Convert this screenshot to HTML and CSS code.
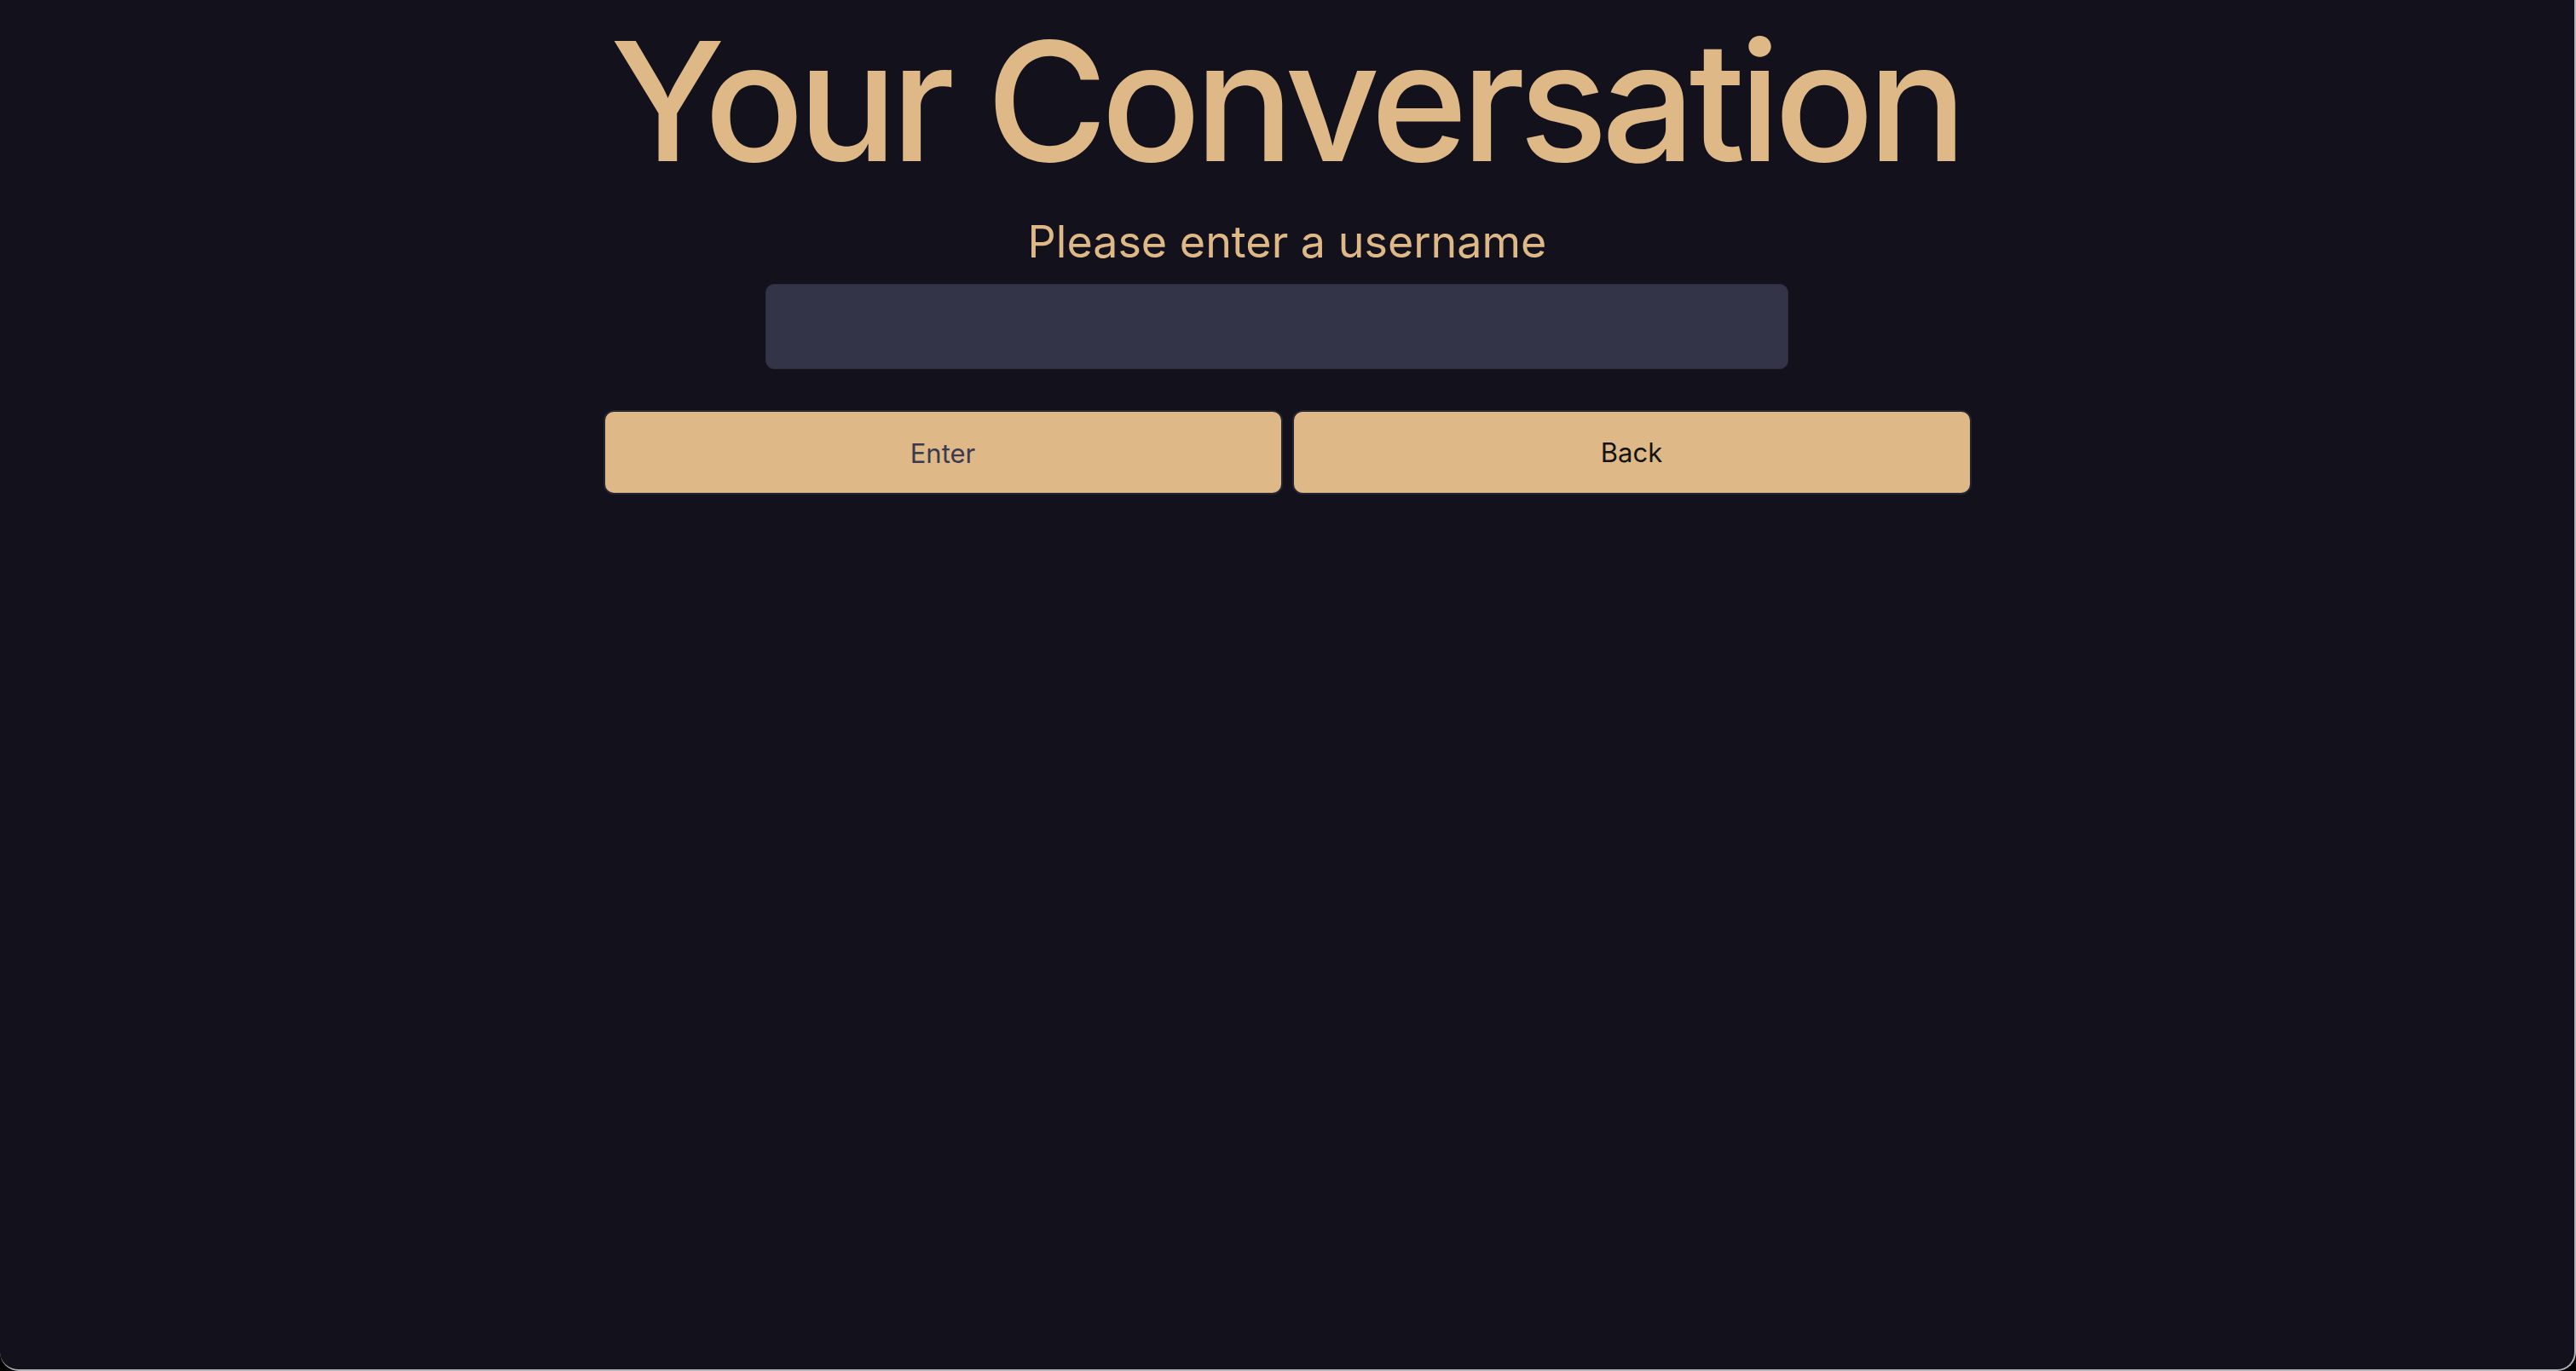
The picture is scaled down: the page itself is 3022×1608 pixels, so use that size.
FILE: index.html
```html
<!DOCTYPE html>
<html lang="en">
<head>
<meta charset="utf-8">
<title>Your Conversation</title>
<link rel="stylesheet" href="styles.css">
</head>
<body>
<div class="window">
  <main class="login">
    <h1 class="title">Your Conversation</h1>
    <p class="prompt">Please enter a username</p>
    <input class="username" type="text" aria-label="Username">
    <div class="actions">
      <button class="btn btn-enter" type="button">Enter</button>
      <button class="btn btn-back" type="button">Back</button>
    </div>
  </main>
</div>
</body>
</html>
```
FILE: styles.css
```css
html, body {
  margin: 0;
  padding: 0;
  background: #000;
  height: 100%;
}

.window {
  box-sizing: border-box;
  width: 3022px;
  height: 1608px;
  background: #13121c;
  border-right: 2px solid #b4b4b8;
  border-bottom: 2px solid #b4b4b8;
  border-radius: 0 0 22px 22px;
  overflow: hidden;
  font-family: Inter, "Noto Sans", sans-serif;
}

.login {
  display: flex;
  flex-direction: column;
  align-items: center;
  padding-top: 22px;
}

.title {
  margin: 0 0 0 -4px;
  font-size: 194px;
  line-height: 1;
  font-weight: 500;
  color: #deb887;
  letter-spacing: -7.5px;
}

.prompt {
  margin: 42px 0 0;
  font-size: 52px;
  line-height: 1;
  font-weight: 400;
  color: #deb887;
}

.username {
  box-sizing: border-box;
  margin: 23px 24px 0 0;
  width: 1200px;
  height: 100px;
  background: #333447;
  border: 1px solid #2c2d3f;
  border-radius: 10px;
  outline: none;
  color: #deb887;
  font-family: inherit;
  font-size: 32px;
}

.actions {
  display: flex;
  gap: 11px;
  margin-top: 48px;
}

.btn {
  box-sizing: border-box;
  width: 797px;
  height: 99px;
  background: #deb887;
  border: 2px solid #262632;
  border-radius: 12px;
  font-family: inherit;
  font-size: 31px;
  font-weight: 400;
  cursor: pointer;
}

.btn-enter {
  color: #393a50;
  padding-top: 3px;
}

.btn-back {
  color: #141414;
}
```
